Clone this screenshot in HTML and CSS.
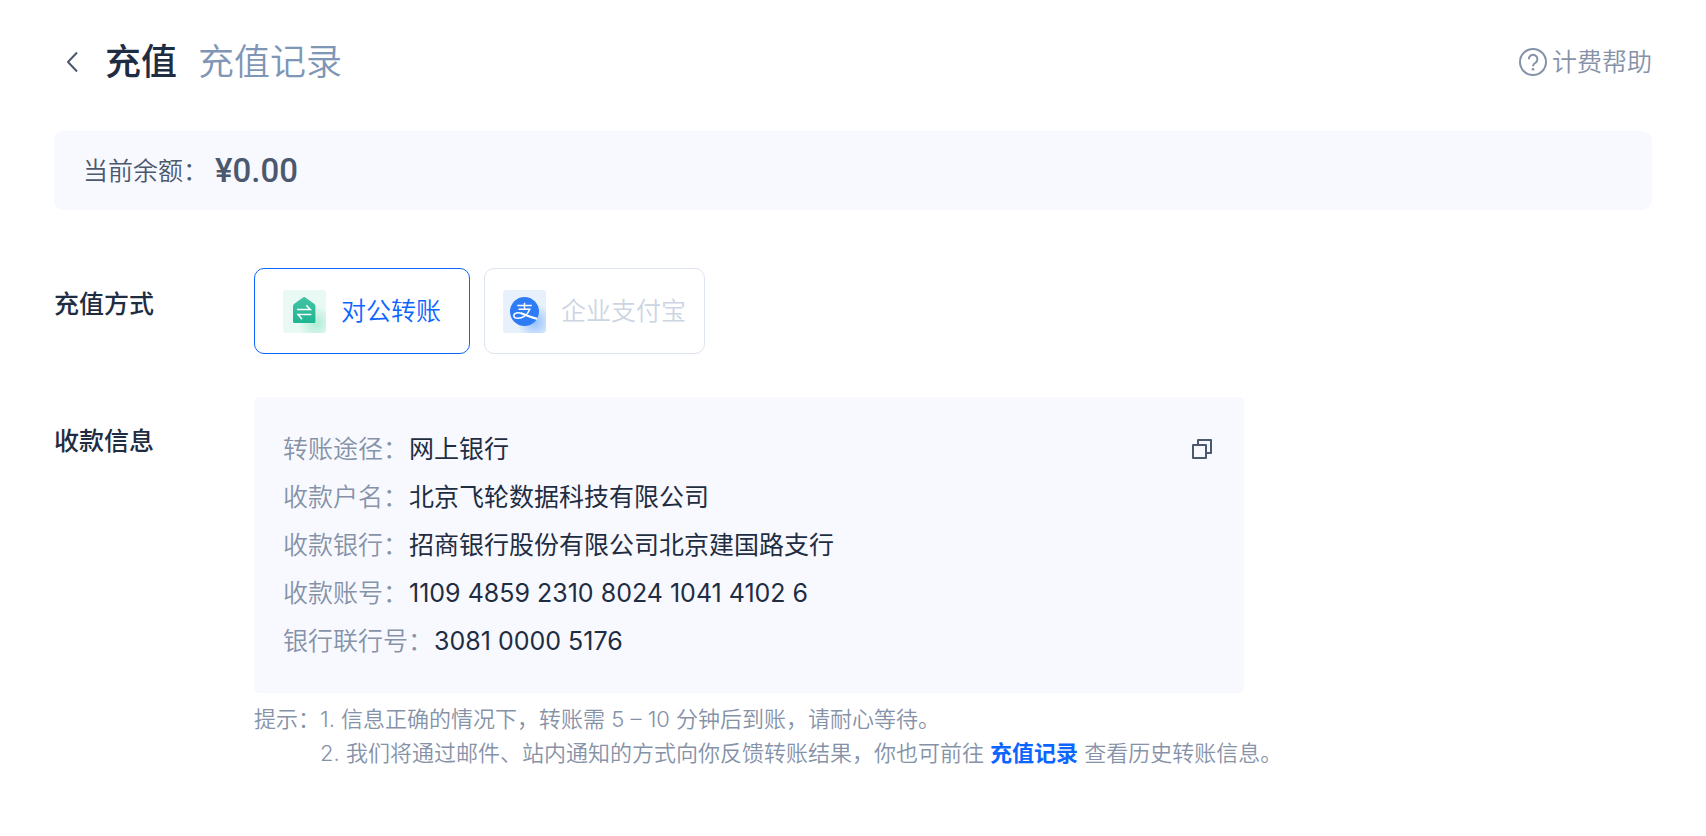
FILE: index.html
```html
<!DOCTYPE html>
<html lang="zh-CN">
<head>
    <meta charset="UTF-8">
    <title>充值</title>
    <link rel="stylesheet" href="styles.css">
</head>
<body>
    <header class="page-header">
        <button type="button" class="back" aria-label="返回">
            <svg width="14" height="24" viewBox="0 0 14 24"><path d="M12 2.500L3 12L12 21.500" /></svg>
        </button>
        <h1>充值</h1>
        <a class="record-tab" href="#">充值记录</a>
        <a class="help" href="#">
            <svg width="30" height="30" viewBox="0 0 30 30">
                <circle cx="15" cy="15" r="13" />
                <path d="M10.800 12.200a4.300 4.300 0 1 1 6.600 3.600c-1.600 1.100-2.400 1.700-2.400 3.400" />
                <circle class="dot" cx="15" cy="22.300" r="1.300" />
            </svg>
            <span>计费帮助</span>
        </a>
    </header>

    <section class="balance">
        <span>当前余额：</span>
        <strong>¥0.00</strong>
    </section>

    <section class="row">
        <h2>充值方式</h2>
        <div class="methods">
            <button type="button" class="method active">
                <svg width="43" height="43" viewBox="0 0 43 43">
                    <defs>
                        <radialGradient id="green-glow">
                            <stop offset="0" stop-color="#b0ecd4" />
                            <stop offset="1" stop-color="#b0ecd4" stop-opacity="0" />
                        </radialGradient>
                        <linearGradient id="green-house" x1="0" y1="0" x2="0" y2="1">
                            <stop offset="0" stop-color="#43c3a4" />
                            <stop offset="1" stop-color="#1fb592" />
                        </linearGradient>
                        <clipPath id="tile"><rect width="43" height="43" rx="3" /></clipPath>
                    </defs>
                    <g clip-path="url(#tile)">
                        <rect width="43" height="43" fill="#e9faf5" />
                        <circle cx="33" cy="33" r="18" fill="url(#green-glow)" />
                    </g>
                    <path fill="url(#green-house)" d="M20 7.500q1.200-.9 2.400 0l9 6.500q1 .8 1 2v15.500q0 1.500-1.500 1.500h-19.400q-1.500 0-1.500-1.500v-15.500q0-1.200 1-2z" />
                    <path fill="none" stroke="#fff" stroke-width="1.500" d="M14 19.500h13.300l-4-4.200M28.300 24.500h-13.300l4 4.700" />
                </svg>
                <span>对公转账</span>
            </button>
            <button type="button" class="method" disabled>
                <svg width="43" height="43" viewBox="0 0 43 43">
                    <defs>
                        <radialGradient id="blue-glow">
                            <stop offset="0" stop-color="#94c1ff" />
                            <stop offset="1" stop-color="#94c1ff" stop-opacity="0" />
                        </radialGradient>
                    </defs>
                    <g clip-path="url(#tile)">
                        <rect width="43" height="43" fill="#e8f0fb" />
                        <circle cx="32" cy="32" r="18" fill="url(#blue-glow)" />
                    </g>
                    <circle cx="21.500" cy="21.500" r="14.500" fill="#2e7bf6" />
                    <path fill="none" stroke="#fff" stroke-width="1.500" d="M14.300 15.600h14.500M21.500 12.700v6.500M15.500 19.200h11.300c-1 2.800-2.800 5-5.300 6.900-3.700 2.700-10.500 3.200-10.700-.3-.1-3.300 4.800-3.600 8.200-2.300" />
                    <path fill="none" stroke="#fff" stroke-width="2" d="M18 23.300c4.500 1.200 9 4.200 16.300 5.400" />
                </svg>
                <span>企业支付宝</span>
            </button>
        </div>
    </section>

    <section class="row info-row">
        <h2>收款信息</h2>
        <div class="info">
            <div class="card">
                <dl>
                    <div><dt>转账途径：</dt><dd>网上银行</dd></div>
                    <div><dt>收款户名：</dt><dd>北京飞轮数据科技有限公司</dd></div>
                    <div><dt>收款银行：</dt><dd>招商银行股份有限公司北京建国路支行</dd></div>
                    <div><dt>收款账号：</dt><dd>1109 4859 2310 8024 1041 4102 6</dd></div>
                    <div><dt>银行联行号：</dt><dd>3081 0000 5176</dd></div>
                </dl>
                <button type="button" class="copy" aria-label="复制">
                    <svg width="20" height="20" viewBox="0 0 20 20"><path d="M6 5.500V1H19V14H14.500M1 6H14V19H1Z" /></svg>
                </button>
            </div>
            <div class="tips">
                <span>提示：</span>
                <div>
                    <p>1. 信息正确的情况下，转账需 5 – 10 分钟后到账，请耐心等待。</p>
                    <p>2. 我们将通过邮件、站内通知的方式向你反馈转账结果，你也可前往 <a href="#">充值记录</a> 查看历史转账信息。</p>
                </div>
            </div>
        </div>
    </section>
</body>
</html>
```
FILE: styles.css
```css
:root {
    --primary-color: #0b66ff;
    --dark-color: #1f2d42;
    --text-color: #4b586e;
    --muted-color: #8592a8;
    --panel-color: #f8f9ff;
}

* {
    box-sizing: border-box;
}

body {
    margin: 0;
    padding: 32px 54px;
    background-color: #fff;
    color: var(--dark-color);
    font-family: Inter, "Noto Sans CJK SC", sans-serif;
    font-size: 25px;
    font-weight: 350;
    line-height: 48px;
}

h1, h2, p, dl, dd {
    margin: 0;
}

a {
    text-decoration: none;
}

svg {
    display: block;
    flex: none;
}

button {
    padding: 0;
    border: 0;
    background: none;
    font: inherit;
    cursor: pointer;
}

.page-header {
    display: flex;
    align-items: center;
    height: 60px;
}

.back {
    margin: 0 26px 0 11px;
}

.back svg, .copy svg {
    fill: none;
    stroke: var(--text-color);
    stroke-width: 2;
    stroke-linejoin: round;
}

h1 {
    font-size: 36px;
    font-weight: 500;
}

.record-tab {
    margin-left: 21px;
    color: #7f96b6;
    font-size: 36px;
}

.help {
    display: flex;
    align-items: center;
    gap: 4px;
    margin-left: auto;
    color: var(--muted-color);
}

.help svg {
    fill: none;
    stroke: var(--muted-color);
    stroke-width: 2;
}

.help .dot {
    fill: var(--muted-color);
    stroke: none;
}

.balance {
    display: flex;
    align-items: center;
    gap: 7px;
    height: 79px;
    margin-top: 39px;
    padding: 0 29px;
    border-radius: 10px;
    background-color: var(--panel-color);
    color: var(--text-color);
}

.balance strong {
    font-family: Roboto, sans-serif;
    font-size: 33px;
    font-weight: 500;
}

.row {
    display: flex;
    margin-top: 58px;
}

.info-row {
    margin-top: 43px;
}

h2 {
    flex: none;
    width: 200px;
    padding-top: 12px;
    font-size: 25px;
    font-weight: 500;
}

.info-row h2 {
    padding-top: 20px;
}

.methods {
    display: flex;
    gap: 14px;
}

.method {
    display: flex;
    align-items: center;
    gap: 15px;
    height: 86px;
    padding: 0 18px;
    border: 1px solid #dee3f2;
    border-radius: 10px;
    color: #cdd5e3;
}

.method.active {
    padding: 0 28px;
    border-color: var(--primary-color);
    color: var(--primary-color);
}

.info {
    flex: 1;
}

.card {
    display: flex;
    align-items: flex-start;
    justify-content: space-between;
    max-width: 990px;
    padding: 28px 32px 28px 29px;
    border-radius: 5px;
    background-color: var(--panel-color);
}

.card dl div {
    display: flex;
    gap: 1px;
}

dt {
    color: var(--muted-color);
}

dd {
    font-weight: 400;
}

.copy {
    margin-top: 14px;
}

.tips {
    display: flex;
    margin-top: 9px;
    color: var(--muted-color);
    font-size: 22px;
    line-height: 34px;
}

.tips a {
    color: var(--primary-color);
    font-weight: 700;
}
```
